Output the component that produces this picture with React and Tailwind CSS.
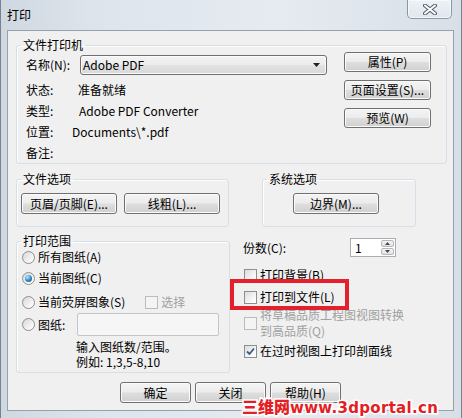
import React from "react";

const Btn = ({ children, className = "" }) => (
  <div
    className={`flex items-center justify-center rounded-[3px] border border-[#707070] bg-[linear-gradient(#f4f4f4,#ececec_48%,#dedede_52%,#d0d0d0)] leading-[14px] shadow-[inset_0_0_0_1px_#fbfbfb] ${className}`}
  >
    {children}
  </div>
);

const Radio = ({ checked }) => (
  <div className="flex h-[13px] w-[13px] shrink-0 items-center justify-center rounded-full border border-[#8e8f8f] bg-[linear-gradient(135deg,#d6d6d6,#f6f6f6_70%,#ffffff)]">
    {checked && (
      <div className="h-[7px] w-[7px] rounded-full bg-[radial-gradient(circle_at_35%_30%,#b6ecff,#2c86bd_55%,#0f4d78)]" />
    )}
  </div>
);

const Check = ({ checked, disabled }) => (
  <div
    className={`flex h-[13px] w-[13px] shrink-0 items-center justify-center border ${
      disabled
        ? "border-[#bcbcbc] bg-[#f4f4f4]"
        : "border-[#8e8f8f] bg-[linear-gradient(135deg,#dcdcdc,#f8f8f8_70%,#ffffff)]"
    }`}
  >
    {checked && (
      <svg width="9" height="9" viewBox="0 0 9 9">
        <path d="M1 4.5 L3.5 7 L8 1.5" fill="none" stroke="#3c5a8c" strokeWidth="1.8" />
      </svg>
    )}
  </div>
);

const Legend = ({ children }) => (
  <legend className="ml-[4px] px-[2px] leading-[14px]">{children}</legend>
);

const group = "rounded-[3px] border border-[#d5dfe5] shadow-[inset_1px_1px_0_#ffffff]";

export default function App() {
  return (
    <div className="relative h-[418px] w-[462px] overflow-hidden bg-[linear-gradient(90deg,#cfd7e0,#dde4ec_20%,#e6ebf1_60%,#d8dfe7)] font-['Noto_Sans_CJK_SC',sans-serif] text-[12px] text-black shadow-[inset_1px_0_0_#76828f,inset_-1px_0_0_#76828f]">
      {/* Title bar */}
      <div className="flex h-[30px] items-start">
        <div className="pl-[7px] pt-[7px] leading-[16px]">打印</div>
        <div className="ml-auto mr-[10px] flex h-[19px] w-[45px] items-center justify-center rounded-b-[5px] border border-t-0 border-[#8a97a5] bg-[linear-gradient(#eef2f6,#dfe6ed)] shadow-[inset_0_0_0_1px_#f6f9fc]">
          <svg width="14" height="11" viewBox="0 0 14 11">
            <path d="M2 1.5 L12 9.5 M12 1.5 L2 9.5" stroke="#55606c" strokeWidth="4" strokeLinecap="round" />
            <path d="M2 1.5 L12 9.5 M12 1.5 L2 9.5" stroke="#ffffff" strokeWidth="2" strokeLinecap="round" />
          </svg>
        </div>
      </div>

      {/* Client area */}
      <div className="ml-[7px] flex h-[381px] w-[447px] flex-col border border-[#97a1ac] bg-[#f0f0f0]">
        {/* 文件打印机 */}
        <fieldset className={`ml-[8px] mt-[7px] w-[431px] ${group}`}>
          <Legend>文件打印机</Legend>
          <div className="flex">
            <div className="pl-[9px]">
              <div className="mt-[3px] flex h-[20px] items-center">
                <div className="w-[54px]">名称(N):</div>
                <div className="flex h-[20px] w-[247px] items-center rounded-[3px] border border-[#707070] bg-[linear-gradient(#f4f4f4,#ececec_48%,#e2e2e2_52%,#d8d8d8)] pl-[2px] pr-[6px] shadow-[inset_0_0_0_1px_#fbfbfb]">
                  <span>Adobe PDF</span>
                  <svg className="ml-auto" width="7" height="4" viewBox="0 0 7 4">
                    <path d="M0 0 H7 L3.5 4 Z" fill="#222" />
                  </svg>
                </div>
              </div>
              <div className="mt-[4px] flex h-[21px] items-center">
                <div className="w-[52px]">状态:</div>
                <div>准备就绪</div>
              </div>
              <div className="flex h-[21px] items-center">
                <div className="w-[53px]">类型:</div>
                <div>Adobe PDF Converter</div>
              </div>
              <div className="flex h-[21px] items-center">
                <div className="w-[46px]">位置:</div>
                <div>Documents\*.pdf</div>
              </div>
              <div className="flex h-[21px] items-center">
                <div>备注:</div>
              </div>
            </div>
            <div className="ml-auto flex flex-col gap-[8px] pr-[15px]">
              <Btn className="h-[20px] w-[87px]">属性(P)</Btn>
              <Btn className="h-[20px] w-[87px]">页面设置(S)...</Btn>
              <Btn className="h-[20px] w-[87px]">预览(W)</Btn>
            </div>
          </div>
        </fieldset>

        {/* 文件选项 / 系统选项 */}
        <div className="mt-[8px] flex">
          <fieldset className={`ml-[8px] w-[213px] pb-[12px] ${group}`}>
            <Legend>文件选项</Legend>
            <div className="ml-[4px] mt-[7px] flex gap-[7px]">
              <Btn className="h-[21px] w-[96px]">页眉/页脚(E)...</Btn>
              <Btn className="h-[21px] w-[96px]">线粗(L)...</Btn>
            </div>
          </fieldset>
          <fieldset className={`ml-[33px] w-[154px] pb-[12px] ${group}`}>
            <Legend>系统选项</Legend>
            <div className="ml-[30px] mt-[7px] flex">
              <Btn className="h-[21px] w-[86px]">边界(M)...</Btn>
            </div>
          </fieldset>
        </div>

        {/* 打印范围 + right column */}
        <div className="mt-[7px] flex">
          <fieldset className={`ml-[8px] w-[214px] pb-[3px] ${group}`}>
            <Legend>打印范围</Legend>
            <div className="flex h-[18px] items-center gap-[3px] pl-[5px]">
              <Radio />
              <span>所有图纸(A)</span>
            </div>
            <div className="mt-[3px] flex h-[18px] items-center gap-[3px] pl-[5px]">
              <Radio checked />
              <span>当前图纸(C)</span>
            </div>
            <div className="mt-[6px] flex h-[18px] items-center gap-[3px] pl-[5px]">
              <Radio />
              <span>当前荧屏图象(S)</span>
              <div className="ml-[17px] flex items-center gap-[3px] text-[#a0a0a0]">
                <Check disabled />
                <span>选择</span>
              </div>
            </div>
            <div className="mt-[2px] flex h-[23px] items-center gap-[3px] pl-[5px]">
              <Radio />
              <span>图纸:</span>
              <div className="ml-[9px] h-[23px] w-[142px] rounded-[2px] border border-[#c2c6cc] bg-[#f6f6f6]" />
            </div>
            <div className="mt-[3px] pl-[59px] leading-[15px]">
              <div>输入图纸数/范围。</div>
              <div>例如: 1,3,5-8,10</div>
            </div>
          </fieldset>

          <div className="ml-[13px] flex flex-col">
            <div className="mt-[4px] flex h-[19px] items-center">
              <div className="w-[107px]">份数(C):</div>
              <div className="flex h-[19px] w-[46px] border border-[#abadb3] bg-white">
                <div className="flex-1 pl-[4px] leading-[17px]">1</div>
                <div className="flex w-[15px] flex-col gap-px p-px">
                  <div className="flex flex-1 items-center justify-center rounded-[2px] border border-[#b5b8bd] bg-[linear-gradient(#f5f5f5,#e1e1e1)]">
                    <svg width="5" height="3" viewBox="0 0 5 3">
                      <path d="M0 3 H5 L2.5 0 Z" fill="#4a4a4a" />
                    </svg>
                  </div>
                  <div className="flex flex-1 items-center justify-center rounded-[2px] border border-[#b5b8bd] bg-[linear-gradient(#f5f5f5,#e1e1e1)]">
                    <svg width="5" height="3" viewBox="0 0 5 3">
                      <path d="M0 0 H5 L2.5 3 Z" fill="#4a4a4a" />
                    </svg>
                  </div>
                </div>
              </div>
            </div>
            <div className="mt-[9px] flex h-[18px] items-center gap-[3px] pl-px">
              <Check />
              <span>打印背景(B)</span>
            </div>
            <div className="relative mt-[4px] flex h-[18px] items-center gap-[3px] pl-px">
              <Check />
              <span>打印到文件(L)</span>
              <div className="absolute left-[-13px] top-[-9px] h-[31px] w-[119px] border-[4px] border-[#e3202b]" />
            </div>
            <div className="mt-[1px] flex items-center gap-[3px] pl-px text-[#a0a0a0]">
              <Check disabled />
              <div className="leading-[16px]">
                <div>将草稿品质工程图视图转换</div>
                <div>到高品质(Q)</div>
              </div>
            </div>
            <div className="mt-[3px] flex h-[18px] items-center gap-[3px] pl-px">
              <Check checked />
              <span>在过时视图上打印剖面线</span>
            </div>
          </div>
        </div>

        {/* bottom buttons */}
        <div className="mt-[9px] flex justify-center gap-[4px]">
          <Btn className="h-[21px] w-[71px]">确定</Btn>
          <Btn className="h-[21px] w-[71px]">关闭</Btn>
          <Btn className="h-[21px] w-[71px]">帮助(H)</Btn>
        </div>
      </div>

      {/* watermark */}
      <div className="absolute left-[242px] top-[396px] flex items-baseline whitespace-nowrap font-bold leading-[20px] text-[#e31e24] [paint-order:stroke_fill] [-webkit-text-stroke:3px_#ffffff]">
        <span className="font-['Noto_Sans_CJK_SC',sans-serif] text-[16px] font-black">三维网</span>
        <span className="font-['DejaVu_Sans',sans-serif] text-[15px] tracking-[0.3px]">www.3dportal.cn</span>
      </div>
    </div>
  );
}
